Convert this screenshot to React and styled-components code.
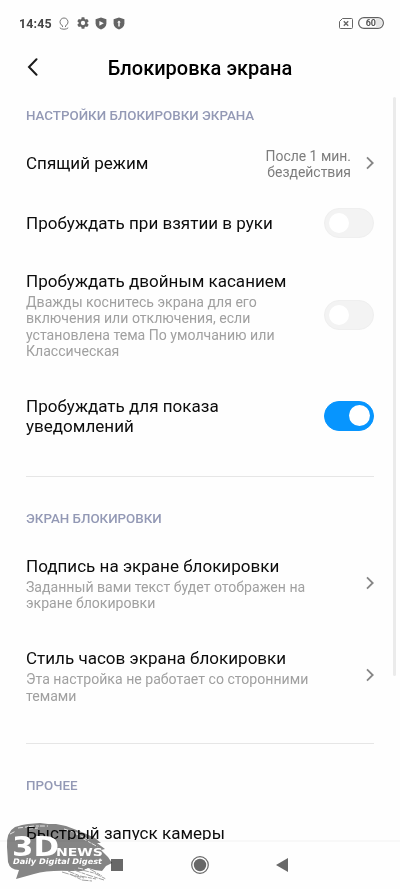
import React, {useState} from 'react';
import styled, {createGlobalStyle} from 'styled-components'

const GlobalStyle = createGlobalStyle`
  * {
    box-sizing: border-box;
  }
  body {
    margin: 0;
    background: #fefefe;
    font-family: Roboto, sans-serif;
    color: #0c0c0c;
    overflow: hidden;
  }
`;

const Screen = styled.div`
  position: relative;
  display: flex;
  flex-direction: column;
  width: 400px;
  height: 889px;
  overflow: hidden;
`;

const StatusBar = styled.div`
  display: flex;
  flex: none;
  align-items: center;
  justify-content: space-between;
  height: 46px;
  padding: 0 16px 0 19px;
`;

const StatusGroup = styled.div`
  display: flex;
  align-items: center;
  gap: ${props => props.gap}px;
`;

const Clock = styled.span`
  width: 33px;
  color: #454545;
  font-size: 12.4px;
  font-weight: 700;
  letter-spacing: 0.2px;
`;

const Header = styled.header`
  display: grid;
  flex: none;
  grid-template-columns: 26px 1fr 26px;
  align-items: center;
  height: 43px;
  padding: 0 25px;
`;

const BackButton = styled.button`
  display: flex;
  padding: 0 0 1px 1px;
  border: 0;
  background: none;
`;

const Title = styled.h1`
  margin: 0;
  color: #000;
  font-size: 20px;
  font-weight: 500;
  text-align: center;
  white-space: nowrap;
`;

const Content = styled.main`
  flex: 1;
  min-height: 0;
  padding: 0 26px;
  overflow: hidden;
`;

const Section = styled.section`
  padding-top: ${props => props.top}px;
  padding-bottom: ${props => props.bottom || 0}px;

  & + & {
    border-top: 1px solid #e6e6e6;
  }
`;

const SectionLabel = styled.h2`
  margin: 0;
  color: #9399b5;
  font-size: 13.35px;
  font-weight: 500;
  line-height: 16px;
`;

const Row = styled.div`
  display: flex;
  align-items: center;
  justify-content: space-between;
  height: ${props => props.height}px;
`;

const RowText = styled.div`
  width: 290px;
`;

const RowTitle = styled.div`
  font-size: 17.05px;
  line-height: 19.6px;
  white-space: pre-line;
`;

const RowDescription = styled.div`
  margin-top: 2.5px;
  color: #a0a0a0;
  font-size: 14.1px;
  line-height: 16.2px;
  white-space: pre-line;
`;

const RowValue = styled.div`
  flex: none;
  margin-right: 15px;
  color: #7d7d7d;
  font-size: 13.95px;
  line-height: 16px;
  text-align: right;
  white-space: pre-line;
`;

const Arrow = styled.svg`
  flex: none;
  margin-bottom: 3px;
`;

const Track = styled.button`
  display: flex;
  flex: none;
  align-items: center;
  justify-content: ${props => props.$on ? 'flex-end' : 'flex-start'};
  width: 50px;
  height: 30px;
  margin-bottom: 2px;
  padding: 0 3px 0 4px;
  border: 1px solid ${props => props.$on ? '#0795fe' : '#efefef'};
  border-radius: 15px;
  background: ${props => props.$on ? '#0795fe' : '#f3f3f3'};
`;

const Knob = styled.span`
  width: ${props => props.$on ? 21 : 20}px;
  height: ${props => props.$on ? 21 : 20}px;
  border-radius: 50%;
  background: #fff;
`;

const ScrollThumb = styled.div`
  position: absolute;
  top: 97px;
  right: 4px;
  width: 3px;
  height: 579px;
  border-radius: 2px;
  background: #ebebeb;
`;

const NavBar = styled.nav`
  display: flex;
  flex: none;
  align-items: center;
  justify-content: space-between;
  height: 49px;
  padding: 0 112px 2px 111px;
  border-top: 2px solid #f8f8f8;
`;

const Watermark = styled.svg`
  position: absolute;
  left: 4px;
  top: 820px;
  mix-blend-mode: multiply;
`;

const WatermarkText = styled.svg`
  position: absolute;
  left: 4px;
  top: 820px;
  font-family: "DejaVu Sans", sans-serif;
  font-weight: 700;
  fill: #fff;
`;

function Chevron() {
    return (
        <Arrow width="8" height="14" viewBox="0 0 8 14" fill="none" stroke="#858585" strokeWidth="1.8">
            <path d="M1 1.4L6.7 7L1 12.6"/>
        </Arrow>
    )
}

function Toggle({initial}) {
    const [on, setOn] = useState(initial);
    return (
        <Track $on={on} onClick={() => setOn(!on)}>
            <Knob $on={on}/>
        </Track>
    )
}

function Setting({height, title, description, children}) {
    return (
        <Row height={height}>
            <RowText>
                <RowTitle>{title}</RowTitle>
                {description && <RowDescription>{description}</RowDescription>}
            </RowText>
            {children}
        </Row>
    )
}

function StatusIcons() {
    return (
        <>
            <svg width="12" height="13" viewBox="0 0 12 13" fill="none" stroke="#777" strokeWidth="1">
                <path d="M4.5 10V8.7A4 4 0 1 1 7.5 8.7V10"/>
                <path d="M1.8 10.8C3.5 12.7 8.5 12.7 10.2 10.8"/>
            </svg>
            <svg width="12" height="12" viewBox="2 2 20 20" fill="#656565">
                <path d="M19.14 12.94c.04-.3.06-.61.06-.94 0-.32-.02-.64-.07-.94l2.03-1.58a.49.49 0 0 0 .12-.61l-1.92-3.32a.49.49 0 0 0-.59-.22l-2.39.96c-.5-.38-1.03-.7-1.62-.94l-.36-2.54A.48.48 0 0 0 13.92 2.4h-3.84a.48.48 0 0 0-.48.41l-.36 2.54c-.59.24-1.13.57-1.62.94l-2.39-.96a.49.49 0 0 0-.59.22L2.74 8.87a.49.49 0 0 0 .12.61l2.03 1.58c-.05.3-.09.63-.09.94s.02.64.07.94l-2.03 1.58a.49.49 0 0 0-.12.61l1.92 3.32c.12.22.37.29.59.22l2.39-.96c.5.38 1.03.7 1.62.94l.36 2.54c.05.24.24.41.48.41h3.84c.24 0 .44-.17.47-.41l.36-2.54c.59-.24 1.13-.56 1.62-.94l2.39.96c.22.08.47 0 .59-.22l1.92-3.32a.49.49 0 0 0-.12-.61zM12 15.6a3.6 3.6 0 1 1 0-7.2 3.6 3.6 0 0 1 0 7.2z"/>
            </svg>
            <svg width="12" height="13" viewBox="0 0 12 13">
                <path d="M6 .5L11.4 2.2V6.5C11.4 9.2 9 11.5 6 12.6C3 11.5 .6 9.2 .6 6.5V2.2Z" fill="#656565"/>
                <path d="M4.4 3.9L8.8 6.3L4.4 8.7Z" fill="#fff"/>
            </svg>
            <svg width="12" height="13" viewBox="0 0 12 13">
                <path d="M6 .5L11.4 2.2V6.5C11.4 9.2 9 11.5 6 12.6C3 11.5 .6 9.2 .6 6.5V2.2Z" fill="#656565"/>
                <path d="M6 3.4L7.8 5.4H6.7V9.4H5.3V5.4H4.2Z" fill="#fff"/>
            </svg>
        </>
    )
}

export default function App() {
    return (
        <Screen>
            <GlobalStyle/>
            <StatusBar>
                <StatusGroup gap={6.3}>
                    <Clock>14:45</Clock>
                    <StatusIcons/>
                </StatusGroup>
                <StatusGroup gap={5}>
                    <svg width="14" height="11" viewBox="0 0 14 11" fill="none" stroke="#666">
                        <path d="M3.5 .5H12.5Q13.5 .5 13.5 1.5V9.5Q13.5 10.5 12.5 10.5H1.5Q.5 10.5 .5 9.5V3.5Z"/>
                        <path d="M4.8 3.3L9.2 7.7M9.2 3.3L4.8 7.7" strokeWidth="1.4"/>
                    </svg>
                    <svg width="26" height="12" viewBox="0 0 26 12">
                        <rect x=".6" y=".6" width="24.8" height="10.8" rx="5.4" fill="#fff" stroke="#606060" strokeWidth="1.2"/>
                        <path d="M18 1.7H20A4.3 4.3 0 0 1 20 10.3H18Z" fill="#e6e6e6"/>
                        <text x="12.8" y="9.2" textAnchor="middle" fontSize="9" fontWeight="700" fill="#555">60</text>
                    </svg>
                </StatusGroup>
            </StatusBar>
            <Header>
                <BackButton>
                    <svg width="13" height="18" viewBox="0 0 13 18" fill="none" stroke="#1b1b1b" strokeWidth="2" strokeLinecap="round">
                        <path d="M10.5 1.3L3 9L10.5 16.7"/>
                    </svg>
                </BackButton>
                <Title>Блокировка экрана</Title>
            </Header>
            <Content>
                <Section top={19} bottom={31}>
                    <SectionLabel>НАСТРОЙКИ БЛОКИРОВКИ ЭКРАНА</SectionLabel>
                    <Row height={80}>
                        <RowTitle>Спящий режим</RowTitle>
                        <Row>
                            <RowValue>{'После 1 мин.\nбездействия'}</RowValue>
                            <Chevron/>
                        </Row>
                    </Row>
                    <Setting height={39} title="Пробуждать при взятии в руки">
                        <Toggle initial={false}/>
                    </Setting>
                    <Setting
                        height={145}
                        title="Пробуждать двойным касанием"
                        description={'Дважды коснитесь экрана для его\nвключения или отключения, если\nустановлена тема По умолчанию или\nКлассическая'}
                    >
                        <Toggle initial={false}/>
                    </Setting>
                    <Setting height={57} title={'Пробуждать для показа\nуведомлений'}>
                        <Toggle initial={true}/>
                    </Setting>
                </Section>
                <Section top={34} bottom={31}>
                    <SectionLabel>ЭКРАН БЛОКИРОВКИ</SectionLabel>
                    <Setting
                        height={114}
                        title="Подпись на экране блокировки"
                        description={'Заданный вами текст будет отображен на\nэкране блокировки'}
                    >
                        <Chevron/>
                    </Setting>
                    <Setting
                        height={71}
                        title="Стиль часов экрана блокировки"
                        description={'Эта настройка не работает со сторонними\nтемами'}
                    >
                        <Chevron/>
                    </Setting>
                </Section>
                <Section top={34}>
                    <SectionLabel>ПРОЧЕЕ</SectionLabel>
                    <Setting height={79} title="Быстрый запуск камеры"/>
                </Section>
            </Content>
            <NavBar>
                <svg width="12" height="12"><rect width="12" height="12" fill="#686868"/></svg>
                <svg width="18" height="18" viewBox="0 0 18 18">
                    <circle cx="9" cy="9" r="8.3" fill="none" stroke="#686868" strokeWidth="1.2"/>
                    <circle cx="9" cy="9" r="6.2" fill="#686868"/>
                </svg>
                <svg width="12" height="14" viewBox="0 0 12 14"><path d="M0 7L12 0V14Z" fill="#686868"/></svg>
            </NavBar>
            <ScrollThumb/>
            <Watermark width="116" height="66" viewBox="0 0 116 66">
                <path fill="#868686" d="M3 27Q2 12 11 7L18 5L24 4L36 3L44 4L52 4L62 6L70 9L80 13L91 18L97 23L93 23L101 29L97 30L104 37L108 43L102 46L98 51L91 50L84 48L78 51L66 51Q44 50 30 54L12 59L15 50Q6 50 4 42Z"/>
                <path fill="none" stroke="#a2a2a2" d="M64 51L76 56L92 59M70 50L84 55L100 60M78 50L90 53L102 59M58 52L68 55L80 58M86 49L98 56M66 54L78 60L88 61" strokeDasharray="7 1 4 1"/>
                <path fill="none" stroke="#fdfdfd" strokeWidth=".8" d="M14 8L30 6L44 6M60 9L76 14M70 13L86 20M24 9L34 8M78 18L94 27M74 48L84 50M6 14L12 11" strokeDasharray="5 2 3 1"/>
            </Watermark>
            <WatermarkText width="116" height="66" viewBox="0 0 116 66">
                <text x="8" y="36" fontSize="26" textLength="47" lengthAdjust="spacingAndGlyphs">3D</text>
                <text x="52" y="36" fontSize="11" textLength="47" lengthAdjust="spacingAndGlyphs">NEWS</text>
                <text x="9" y="44" fontSize="7.6" fontStyle="italic" textLength="89" lengthAdjust="spacingAndGlyphs">Daily Digital Digest</text>
            </WatermarkText>
        </Screen>
    )
}
